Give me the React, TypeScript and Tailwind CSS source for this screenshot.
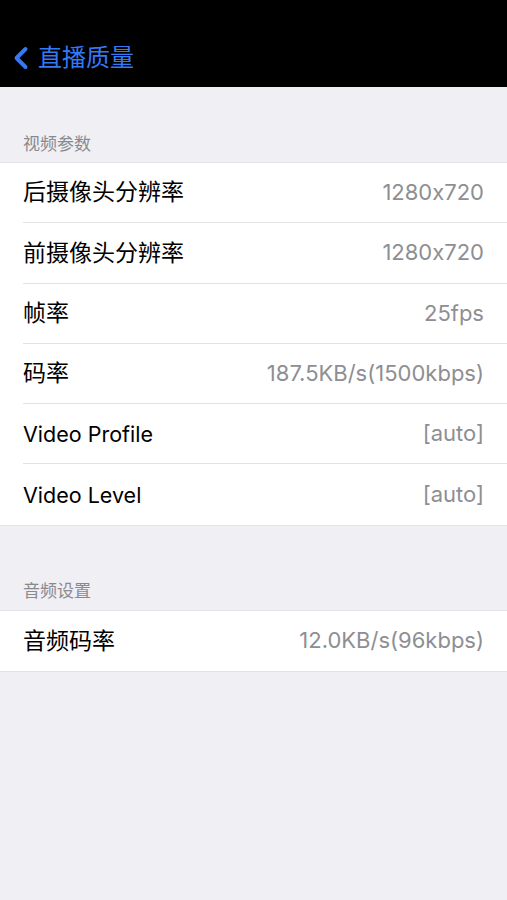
import { ChevronLeft } from "lucide-react";

type Row = { label: string; value: string };

const video: Row[] = [
  { label: "后摄像头分辨率", value: "1280x720" },
  { label: "前摄像头分辨率", value: "1280x720" },
  { label: "帧率", value: "25fps" },
  { label: "码率", value: "187.5KB/s(1500kbps)" },
  { label: "Video Profile", value: "[auto]" },
  { label: "Video Level", value: "[auto]" },
];

const audio: Row[] = [{ label: "音频码率", value: "12.0KB/s(96kbps)" }];

const font = {
  fontFamily: '"Inter", "Noto Sans CJK SC", sans-serif',
  fontFeatureSettings: '"calt" 0',
};

function Section({ title, rows, headerHeight }: { title: string; rows: Row[]; headerHeight: string }) {
  return (
    <div>
      <div className={`flex items-end pl-[23px] pb-[5px] text-[17px] text-[#8a8a8e] ${headerHeight}`}>
        {title}
      </div>
      <div className="bg-white border-y border-[#e2e2e6]">
        {rows.map((r, i) => (
          <div key={r.label} className="pl-[23px]">
            <div
              className={`flex items-center justify-between h-[60.3px] pr-[23px] ${
                i < rows.length - 1 ? "border-b border-[#e2e2e6]" : ""
              }`}>
              <span className={/^[A-Za-z]/.test(r.label) ? "text-[21.5px] text-black" : "text-[23px] text-black"}>
                {r.label}
              </span>
              <span className="text-[22px] text-[#8e8e93]">{r.value}</span>
            </div>
          </div>
        ))}
      </div>
    </div>
  );
}

export default function App() {
  return (
    <div className="w-[507px] h-[900px] bg-[#efeff4]" style={font}>
      <div className="bg-black h-[87px] flex items-end pb-[11px]">
        <div className="flex items-center text-[#3479f6]">
          <ChevronLeft size={36} strokeWidth={2.6} className="ml-[3px]" />
          <span className="text-[24px] -ml-[1px]">直播质量</span>
        </div>
      </div>
      <Section title="视频参数" rows={video} headerHeight="h-[75px]" />
      <Section title="音频设置" rows={audio} headerHeight="h-[84px]" />
    </div>
  );
}
